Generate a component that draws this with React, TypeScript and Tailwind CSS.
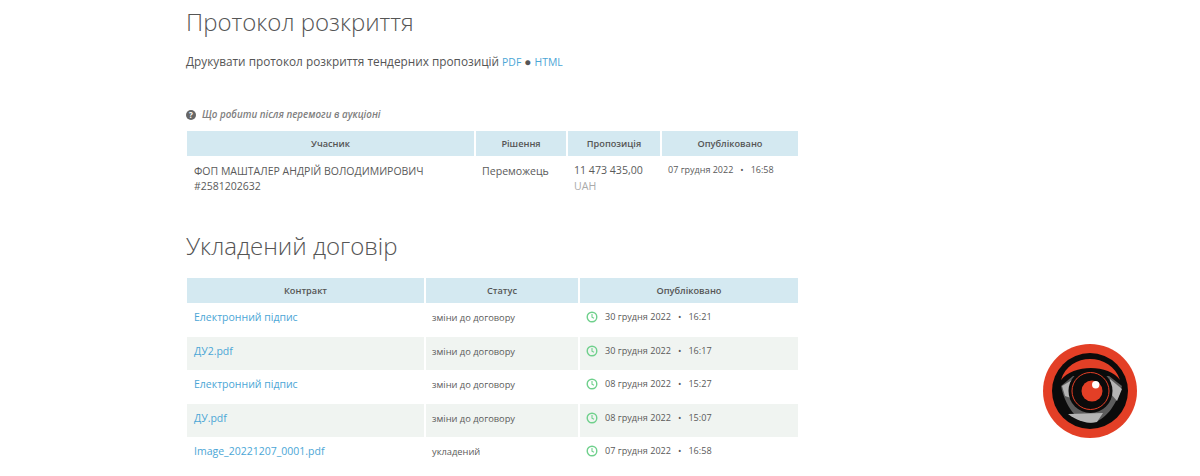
const bidders = [
  { name: "ФОП МАШТАЛЕР АНДРІЙ ВОЛОДИМИРОВИЧ", code: "#2581202632", status: "Переможець", amount: "11 473 435,00", currency: "UAH", date: "07 грудня 2022", time: "16:58" },
];

const contracts = [
  { title: "Електронний підпис", status: "зміни до договору", date: "30 грудня 2022", time: "16:21" },
  { title: "ДУ2.pdf", status: "зміни до договору", date: "30 грудня 2022", time: "16:17" },
  { title: "Електронний підпис", status: "зміни до договору", date: "08 грудня 2022", time: "15:27" },
  { title: "ДУ.pdf", status: "зміни до договору", date: "08 грудня 2022", time: "15:07" },
  { title: "Image_20221207_0001.pdf", status: "укладений", date: "07 грудня 2022", time: "16:58" },
];

const ClockIcon = () => (
  <svg width="12" height="12" viewBox="0 0 12 12" fill="none" stroke="#6fd08c" strokeWidth="1.4" className="shrink-0">
    <circle cx="6" cy="6" r="4.8" />
    <path d="M6 3v3.2l2 1.1" strokeWidth="1.1" />
  </svg>
);

const Logo = () => (
  <svg viewBox="0 0 94 94" className="absolute left-[1043px] top-[344px] w-[94px] h-[94px]">
    <circle cx="47" cy="47" r="47" fill="#e33f26" />
    <circle cx="47" cy="47" r="38" fill="#0b0b0b" />
    <path d="M18 36C26 8 68 8 77 36C66 20 30 20 18 36Z" fill="#e33f26" />
    <path d="M18 42L30 32H66L79 42C74 60 62 78 47 79C34 78 22 62 18 42Z" fill="#5c5c5c" />
    <path d="M25 70L60 69L54 78C46 80 36 78 25 70Z" fill="#b4b4b4" />
    <path d="M19 42L29 36L28 54L22 52Z" fill="#b4b4b4" />
    <path d="M67 35L79 45L74 57L68 50Z" fill="#b4b4b4" />
    <circle cx="47.5" cy="47" r="22" fill="#0b0b0b" />
    <circle cx="47.5" cy="47" r="18.5" fill="none" stroke="#e33f26" strokeWidth="1" />
    <circle cx="49" cy="47" r="10.5" fill="#e33f26" />
    <circle cx="52.7" cy="40.7" r="3.7" fill="#ffffff" />
  </svg>
);

export default function App() {
  return (
    <div className="relative h-[476px] overflow-hidden bg-white font-['Open_Sans',sans-serif] text-[#5a5a5a]">
      <div className="pl-[186px] w-[800px]">
        <h2 className="pt-[5px] text-[24px] leading-[33px] font-light text-[#555]">Протокол розкриття</h2>
        <p className="mt-[13px] text-[11.8px] leading-[20px] text-[#555]">
          Друкувати протокол розкриття тендерних пропозицій <a className="text-[10.4px] leading-none text-[#4ba6d6]">PDF</a> ● <a className="text-[10.4px] leading-none text-[#4ba6d6]">HTML</a>
        </p>
        <p className="mt-[36px] flex items-center gap-[6px] text-[9.8px] leading-[16px] italic font-semibold text-[#808080]">
          <span className="flex h-[10px] w-[10px] items-center justify-center rounded-full bg-[#666] text-[8px] not-italic font-bold text-white">?</span>
          Що робити після перемоги в аукціоні
        </p>

        <table className="mt-[8px] ml-[-1px] w-[615px] table-fixed border-separate border-spacing-x-[2px] border-spacing-y-0">
          <thead>
            <tr className="text-[9.2px] text-[#555]">
              <th className="w-[287px] h-[25px] bg-[#d4e9f1] font-semibold">Учасник</th>
              <th className="w-[90px] bg-[#d4e9f1] font-semibold">Рішення</th>
              <th className="w-[92px] bg-[#d4e9f1] font-semibold">Пропозиція</th>
              <th className="bg-[#d4e9f1] font-semibold">Опубліковано</th>
            </tr>
          </thead>
          <tbody>
            {bidders.map((b) => (
              <tr key={b.code} className="align-top">
                <td className="pl-[7px] pt-[7.5px] text-[10.5px] leading-[15px]">
                  {b.name}
                  <br />
                  {b.code}
                </td>
                <td className="pl-[6px] pt-[6px] text-[10.6px] leading-[18px]">{b.status}</td>
                <td className="pl-[6px] pt-[6px] text-[10.6px] leading-[16px]">
                  {b.amount}
                  <div className="text-[#aaa]">{b.currency}</div>
                </td>
                <td className="pl-[6px] pt-[6px] text-[9px] leading-[15px] whitespace-nowrap">
                  {b.date}
                  <span className="mx-[7px]">•</span>
                  {b.time}
                </td>
              </tr>
            ))}
          </tbody>
        </table>

        <h2 className="mt-[35px] text-[24px] leading-[33px] font-light text-[#555]">Укладений договір</h2>

        <table className="mt-[16px] ml-[-1px] w-[615px] table-fixed border-separate border-spacing-x-[2px] border-spacing-y-0">
          <thead>
            <tr className="text-[9.2px] text-[#555]">
              <th className="w-[237px] h-[25px] bg-[#d4e9f1] font-semibold">Контракт</th>
              <th className="w-[152px] bg-[#d4e9f1] font-semibold">Статус</th>
              <th className="bg-[#d4e9f1] font-semibold">Опубліковано</th>
            </tr>
          </thead>
          <tbody>
            {contracts.map((c, i) => (
              <tr key={i} className="align-top">
                <td className={`h-[33.5px] pl-[7px] pt-[6px] text-[10.5px] leading-[16px] text-[#4ba6d6] ${i % 2 === 1 ? "bg-[#f0f4f1]" : ""}`}>{c.title}</td>
                <td className={`pl-[6px] pt-[7px] text-[9.3px] leading-[15px] ${i % 2 === 1 ? "bg-[#f0f4f1]" : ""}`}>{c.status}</td>
                <td className={`pl-[6px] pt-[7px] text-[9.1px] leading-[14px] ${i % 2 === 1 ? "bg-[#f0f4f1]" : ""}`}>
                  <div className="flex items-center">
                    <ClockIcon />
                    <span className="ml-[7px]">{c.date}</span>
                    <span className="mx-[7px]">•</span>
                    <span>{c.time}</span>
                  </div>
                </td>
              </tr>
            ))}
          </tbody>
        </table>
      </div>
      <Logo />
    </div>
  );
}
